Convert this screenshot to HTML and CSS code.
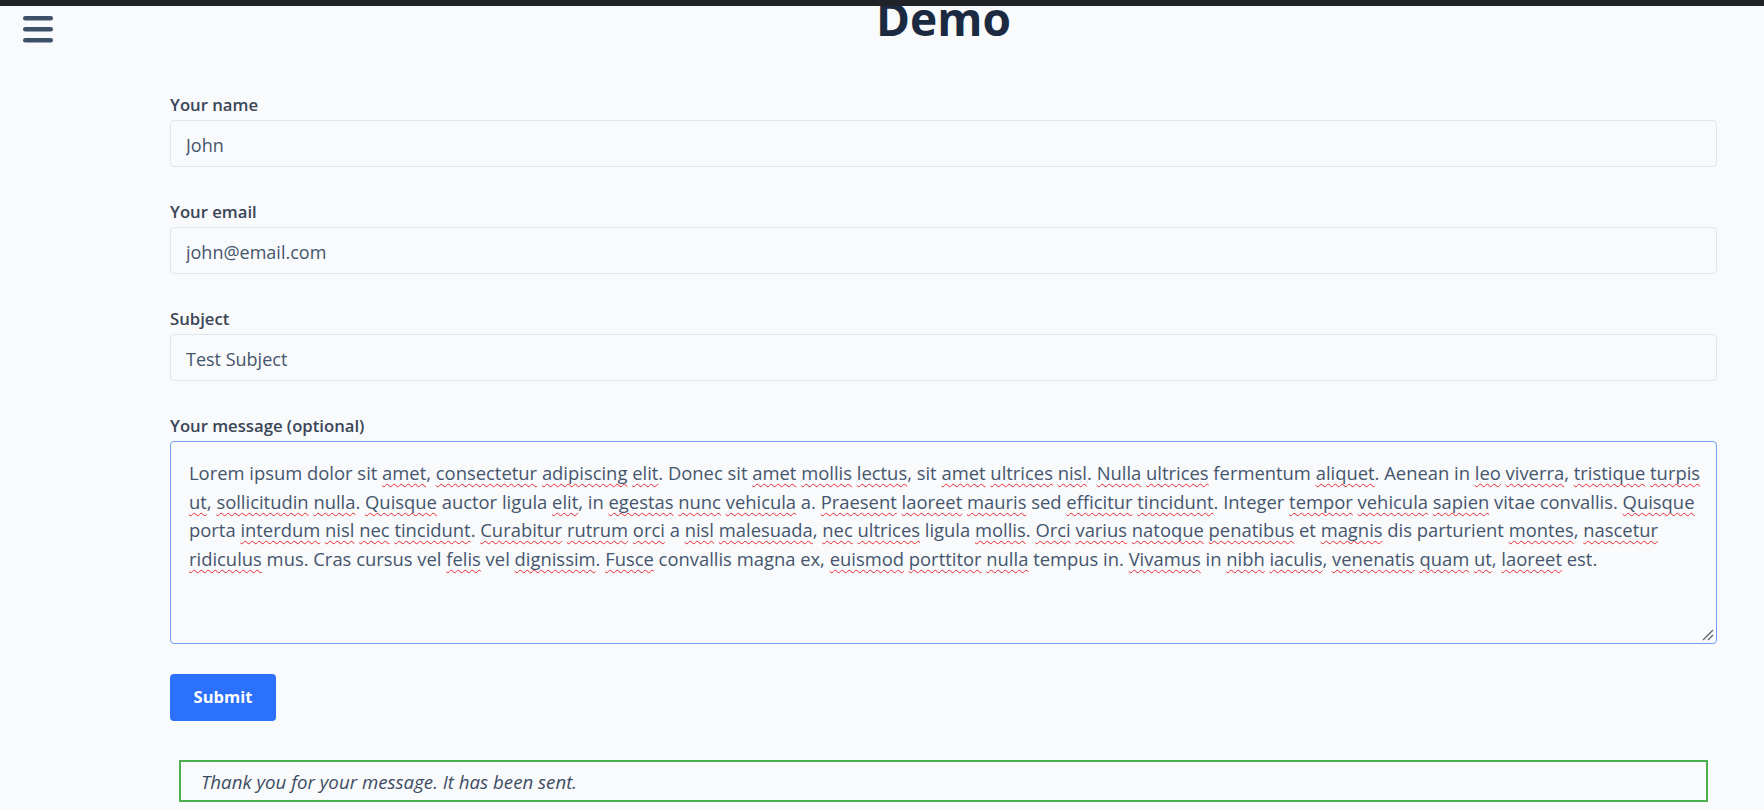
FILE: index.html
```html
<!DOCTYPE html>
<html lang="en">
<head>
<meta charset="utf-8">
<title>Demo</title>
<link rel="stylesheet" href="styles.css">
</head>
<body>
<div class="topbar"></div>
<button class="menu-toggle" aria-label="Menu">
  <svg width="30" height="27" viewBox="0 0 30 27"><rect x="0" y="0" width="30" height="4.6" rx="2.3"/><rect x="0" y="11" width="30" height="4.6" rx="2.3"/><rect x="0" y="22" width="30" height="4.6" rx="2.3"/></svg>
</button>
<main class="page">
  <h1 class="title">Demo</h1>
  <form class="form">
    <div class="field">
      <label class="label">Your name</label>
      <input class="control" type="text" value="John">
    </div>
    <div class="field">
      <label class="label">Your email</label>
      <input class="control" type="text" value="john@email.com">
    </div>
    <div class="field">
      <label class="label">Subject</label>
      <input class="control" type="text" value="Test Subject">
    </div>
    <div class="field field-msg">
      <label class="label">Your message (optional)</label>
      <div class="textarea" role="textbox">Lorem ipsum dolor sit <span class="sp">amet</span>, <span class="sp">consectetur</span> <span class="sp">adipiscing</span> <span class="sp">elit</span>. Donec sit <span class="sp">amet</span> <span class="sp">mollis</span> <span class="sp">lectus</span>, sit <span class="sp">amet</span> <span class="sp">ultrices</span> <span class="sp">nisl</span>. <span class="sp">Nulla</span> <span class="sp">ultrices</span> fermentum <span class="sp">aliquet</span>. Aenean in <span class="sp">leo</span> <span class="sp">viverra</span>, <span class="sp">tristique</span> <span class="sp">turpis</span><br><span class="sp">ut</span>, <span class="sp">sollicitudin</span> <span class="sp">nulla</span>. <span class="sp">Quisque</span> auctor ligula <span class="sp">elit</span>, in <span class="sp">egestas</span> <span class="sp">nunc</span> <span class="sp">vehicula</span> a. <span class="sp">Praesent</span> <span class="sp">laoreet</span> <span class="sp">mauris</span> sed <span class="sp">efficitur</span> <span class="sp">tincidunt</span>. Integer <span class="sp">tempor</span> <span class="sp">vehicula</span> <span class="sp">sapien</span> vitae convallis. <span class="sp">Quisque</span><br>porta <span class="sp">interdum</span> <span class="sp">nisl</span> <span class="sp">nec</span> <span class="sp">tincidunt</span>. <span class="sp">Curabitur</span> <span class="sp">rutrum</span> <span class="sp">orci</span> a <span class="sp">nisl</span> <span class="sp">malesuada</span>, <span class="sp">nec</span> <span class="sp">ultrices</span> ligula <span class="sp">mollis</span>. <span class="sp">Orci</span> <span class="sp">varius</span> <span class="sp">natoque</span> <span class="sp">penatibus</span> et <span class="sp">magnis</span> dis parturient <span class="sp">montes</span>, <span class="sp">nascetur</span><br><span class="sp">ridiculus</span> mus. Cras cursus vel <span class="sp">felis</span> vel <span class="sp">dignissim</span>. <span class="sp">Fusce</span> convallis magna ex, <span class="sp">euismod</span> <span class="sp">porttitor</span> <span class="sp">nulla</span> tempus in. <span class="sp">Vivamus</span> in <span class="sp">nibh</span> <span class="sp">iaculis</span>, <span class="sp">venenatis</span> <span class="sp">quam</span> <span class="sp">ut</span>, <span class="sp">laoreet</span> est.<svg class="grip" width="12" height="12" viewBox="0 0 12 12"><path d="M11 1 L1 11 M11 6 L6 11" stroke="#5f6368" stroke-width="1.3" fill="none"/></svg></div>
    </div>
    <button class="submit" type="button">Submit</button>
    <div class="notice">Thank you for your message. It has been sent.</div>
  </form>
</main>
</body>
</html>
```
FILE: styles.css
```css
html, body {
  margin: 0;
  padding: 0;
}
body {
  background: #f8fafc;
  font-family: "Open Sans", "Noto Sans", sans-serif;
  color: #3f4d63;
}
.topbar {
  position: fixed;
  top: 0;
  left: 0;
  right: 0;
  height: 6px;
  background: #1f2227;
  z-index: 10;
}
.menu-toggle {
  position: absolute;
  top: 16px;
  left: 23px;
  padding: 0;
  margin: 0;
  border: 0;
  background: none;
  line-height: 0;
}
.menu-toggle svg {
  fill: #3d5068;
  display: block;
}
.page {
  padding: 0 47px 0 170px;
}
.title {
  margin: 0 0 57px;
  text-align: center;
  font-size: 46px;
  line-height: 36px;
  font-weight: 700;
  color: #1b2a40;
}
.form {
  display: flex;
  flex-direction: column;
  align-items: stretch;
}
.field {
  display: flex;
  flex-direction: column;
  margin-bottom: 33px;
}
.field-msg {
  margin-bottom: 30px;
}
.label {
  display: block;
  font-size: 16.7px;
  line-height: 23px;
  font-weight: 600;
  color: #3a4556;
  margin-bottom: 4px;
}
.control {
  box-sizing: border-box;
  height: 47px;
  margin: 0;
  padding: 3px 15px 0;
  border: 1px solid #e0e5eb;
  border-radius: 4px;
  background: #f8fafc;
  font-family: "Open Sans", "Noto Sans", sans-serif;
  font-size: 18px;
  color: #45556c;
  outline: none;
}
.textarea {
  position: relative;
  box-sizing: border-box;
  height: 203px;
  padding: 17px 18px;
  border: 1px solid #74a2f0;
  border-radius: 4px;
  background: #f8fafc;
  font-size: 18.4px;
  line-height: 28.7px;
  color: #45556c;
  white-space: nowrap;
  overflow: hidden;
}
.sp {
  text-decoration: underline wavy #e8282e;
  text-decoration-thickness: 1px;
  text-underline-offset: 3px;
  text-decoration-skip-ink: none;
}
.grip {
  position: absolute;
  right: 2px;
  bottom: 2px;
}
.submit {
  align-self: flex-start;
  box-sizing: border-box;
  height: 47px;
  width: 106px;
  margin: 0 0 39px;
  padding: 0 0 3px;
  border: 0;
  border-radius: 4px;
  background: #2b71fb;
  color: #ffffff;
  font-family: "Open Sans", "Noto Sans", sans-serif;
  font-size: 16.5px;
  font-weight: 700;
}
.notice {
  box-sizing: border-box;
  height: 42px;
  margin: 0 9px;
  padding: 0 20px;
  border: 2px solid #4caf50;
  display: flex;
  align-items: center;
  font-size: 18.7px;
  font-style: italic;
  color: #3f4d63;
}
```
